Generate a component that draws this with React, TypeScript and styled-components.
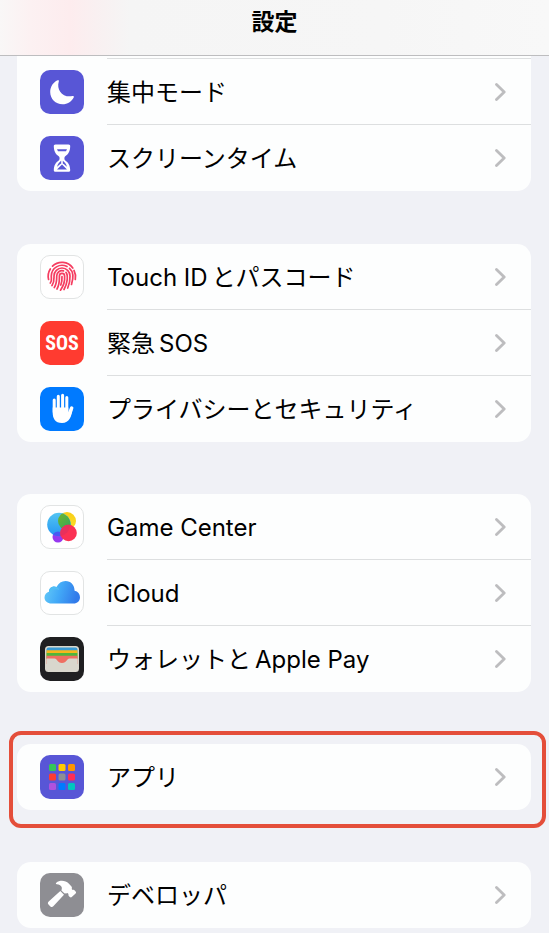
import React from "react";
import styled, { createGlobalStyle } from "styled-components";

const GlobalStyle = createGlobalStyle`
  *, *::before, *::after { box-sizing: border-box; }
  body {
    margin: 0;
    background: #f0f1f6;
    color: #000;
    font-family: Inter, "Noto Sans CJK JP", sans-serif;
  }
`;

const Page = styled.div`
  min-height: 100vh;
`;

const Header = styled.header`
  display: flex;
  justify-content: center;
  height: 56px;
  padding-top: 6px;
  border-bottom: 1px solid #bdbdbf;
  background: linear-gradient(90deg, #f9f7f7 0, #fcf1f2 30px, #fdecee 70px, #f9f0f1 96px, #f5f5f5 130px, #f6f6f6 70%, #f8f8f8 100%);
`;

const Title = styled.h1`
  margin: 0;
  font-size: 23px;
  line-height: 32px;
  font-weight: 700;
`;

const Main = styled.main`
  display: flex;
  flex-direction: column;
  gap: 52px;
  padding: 0 18px 5px 17px;
`;

const Group = styled.section<{ $continued?: boolean }>`
  position: relative;
  border-radius: ${(p) => (p.$continued ? "0 0 14px 14px" : "14px")};
  background: #fdfefe;
  padding-top: ${(p) => (p.$continued ? "3px" : "0")};
  margin-bottom: ${(p) => (p.$continued ? "1px" : "0")};
`;

const Highlight = styled.div`
  position: absolute;
  inset: -13px -15px -18px -8px;
  border: 4px solid #e44e3a;
  border-radius: 12px;
  pointer-events: none;
`;

const List = styled.ul`
  list-style: none;
  margin: 0;
  padding: 0;
`;

const Row = styled.a`
  display: flex;
  align-items: center;
  gap: 23px;
  height: 66px;
  padding-left: 23px;
  color: inherit;
  text-decoration: none;
`;

const RowBody = styled.span<{ $line: boolean }>`
  flex: 1;
  display: flex;
  align-items: center;
  justify-content: space-between;
  height: 66px;
  padding-right: 24px;
  box-shadow: ${(p) => (p.$line ? "0 -1px 0 #dddfe0" : "none")};
`;

const Label = styled.span`
  display: flex;
  gap: 4px;
  padding-top: 2px;
  font-size: 24px;
  line-height: 32px;
  white-space: nowrap;
`;

const Tile = styled.span<{ $bg: string; $outlined?: boolean }>`
  display: flex;
  align-items: center;
  justify-content: center;
  flex: none;
  width: 44px;
  height: 44px;
  border-radius: 10px;
  background: ${(p) => p.$bg};
  border: ${(p) => (p.$outlined ? "1px solid #e2e4e4" : "none")};
  color: #fff;
`;

const SosText = styled.span`
  font-family: "Liberation Sans Narrow", "Roboto Condensed", Roboto, sans-serif;
  font-size: 20px;
  line-height: 24px;
  font-weight: 700;
`;

const Art = styled.svg`
  display: block;
  flex: none;
`;

const Chevron = () => (
  <Art width="12" height="20" viewBox="0 0 12 20" fill="none" stroke="#bdbdbf" strokeWidth="2.8" strokeLinecap="round" strokeLinejoin="round" aria-hidden>
    <path d="M1.500 2.400 L9.200 10 L1.500 17.600" />
  </Art>
);

const Moon = () => (
  <Art width="44" height="44" viewBox="0 0 44 44" fill="#fff" aria-hidden>
    <path d="M17.6 10.3 C18.6 9.9 19.2 10.4 18.8 11.4 C16.2 19.5 22.5 28 32.4 26.1 C33.5 25.8 34.2 26.5 33.7 27.5 C31.6 31.7 27.4 34.3 22.6 34.3 C15.6 34.3 10.2 28.9 10.2 22 C10.2 16.6 13.2 12.3 17.6 10.3 Z" />
  </Art>
);

const Hourglass = () => (
  <Art width="44" height="44" viewBox="0 0 44 44" aria-hidden>
    <path fill="#fff" d="M15.500 8.600 H28.500 C29.700 8.600 30.300 9.300 30.200 10.400 C30 15.500 28.300 18 25 20.400 C24.200 21.200 24.200 23.400 25 24.200 C28.300 26.500 30 29 30.200 34 C30.300 35.200 29.700 35.800 28.500 35.800 H15.500 C14.300 35.800 13.700 35.200 13.800 34 C14 29 15.700 26.500 19 24.200 C19.800 23.400 19.800 21.200 19 20.400 C15.700 18 14 15.500 13.800 10.400 C13.700 9.300 14.300 8.600 15.500 8.600 Z" />
    <path fill="#5856d6" d="M17 13.300 H27 L26 15.300 H18 Z M21.200 24.800 V27.400 C19.500 28.500 18 29.500 17.200 31 C17.300 28.500 18.700 26.700 21.200 24.800 Z M22.800 24.800 V27.400 C24.500 28.500 26 29.500 26.800 31 C26.700 28.500 25.300 26.700 22.800 24.800 Z M22 28.500 L27 33.400 H17 Z" />
  </Art>
);

const Fingerprint = () => (
  <Art width="42" height="42" viewBox="1 1 42 42" fill="none" stroke="#f53d60" strokeWidth="1.7" strokeLinecap="round" aria-hidden>
    <path d="M12.500 11.200 A13.400 13.400 0 0 1 32.800 13" />
    <path d="M10.300 14 A13.400 13.400 0 0 0 8.600 24.500" />
    <path d="M34 15.500 A14 14 0 0 1 35.300 24.500" />
    <path d="M10.300 28 C12.200 25.500 11.200 23.500 11.300 21 A10.700 10.700 0 0 1 27 11.600" />
    <path d="M29.500 13.400 C33.800 17 33.200 24 31.500 29.500" />
    <path d="M12 30.500 C14.500 27 14 24 14 21 A8 8 0 0 1 30 21 C30.200 26 29.200 29.500 27.700 33" />
    <path d="M14.300 32.500 C17 28.500 16.700 25 16.700 21 A5.300 5.300 0 0 1 23.500 15.900" />
    <path d="M26 17.400 C28.500 20.500 27.200 29 24 34.500" />
    <path d="M17 34 C19.700 29.500 19.400 25 19.400 21 A2.600 2.600 0 0 1 24.600 21 C25 26 23.500 31 20.500 35.200" />
    <path d="M22 21.500 C22.200 25 21.700 27.500 20.800 30" />
  </Art>
);

const Hand = () => (
  <Art width="44" height="44" viewBox="0 0 44 44" aria-hidden>
    <g stroke="#fff" strokeWidth="3" strokeLinecap="round" fill="none">
      <path d="M14.200 13 V25 M18.300 9.300 V24 M22.600 8.300 V24 M26.800 10.600 V25" />
      <path d="M31.700 21 L28.500 29" strokeWidth="3.400" />
    </g>
    <path fill="#fff" d="M12.700 20.500 H28.300 V25.500 L32.500 23 C31.500 29 29.500 36 22 36 C15 36 12.700 31 12.700 26 Z" />
  </Art>
);

const GameCenter = () => (
  <Art width="42" height="42" viewBox="1 1 42 42" aria-hidden>
    <defs>
      <linearGradient id="gc-blue" x1="0" y1="0" x2="0" y2="1">
        <stop offset="0" stopColor="#54c5f2" />
        <stop offset="1" stopColor="#2496f4" />
      </linearGradient>
      <linearGradient id="gc-yellow" x1="0" y1="0" x2="0" y2="1">
        <stop offset="0" stopColor="#f8cd16" />
        <stop offset="1" stopColor="#fbe12b" />
      </linearGradient>
      <linearGradient id="gc-green" x1="0" y1="0" x2="1" y2="1">
        <stop offset="0" stopColor="#75b52a" />
        <stop offset="1" stopColor="#20a568" />
      </linearGradient>
      <clipPath id="gc-clip"><circle cx="19" cy="19.500" r="11.500" /></clipPath>
    </defs>
    <circle cx="18" cy="32" r="5.500" fill="#9638ef" />
    <circle cx="27" cy="16" r="9" fill="url(#gc-yellow)" />
    <circle cx="19" cy="19.500" r="11.800" fill="url(#gc-blue)" />
    <circle cx="27" cy="16" r="9" fill="url(#gc-green)" clipPath="url(#gc-clip)" />
    <circle cx="18" cy="32" r="5.500" fill="#4759f2" clipPath="url(#gc-clip)" />
    <circle cx="28.500" cy="28" r="8.300" fill="#fb3154" />
    <path d="M20.500 26 A8.300 8.300 0 0 1 30.200 19.900 A11.800 11.800 0 0 1 20.500 31 Z" fill="#e8305c" />
  </Art>
);

const Cloud = () => (
  <Art width="42" height="42" viewBox="1 1 42 42" aria-hidden>
    <defs>
      <linearGradient id="cloud-fill" x1="0" y1="0" x2="1" y2="0.200">
        <stop offset="0" stopColor="#68cdf8" />
        <stop offset="0.500" stopColor="#42a9f7" />
        <stop offset="1" stopColor="#327bea" />
      </linearGradient>
    </defs>
    <path fill="url(#cloud-fill)" d="M11.500 32.500 C7.500 32.500 4.500 30 4.500 26.500 C4.500 23.500 6.500 21.500 9 20.700 C8.700 16.800 13 14.200 16.500 16 C18.500 12 21.500 10 25.500 10 C31 10 34.500 14 34.600 19.800 C38 20.500 40 23 40 26.200 C40 30 37.300 32.500 33.500 32.500 Z" />
    <path d="M16.500 16 C18 16.500 19 17.500 19.200 19 C16.500 17.500 13 18 11 20.500 C10.500 20.400 9.500 20.500 9 20.700 C8.700 16.800 13 14.200 16.500 16 Z" fill="#51bdf4" />
  </Art>
);

const Wallet = () => (
  <Art width="44" height="44" viewBox="0 0 44 44" aria-hidden>
    <defs>
      <clipPath id="wallet-clip"><rect x="6.500" y="10.500" width="31" height="23.500" rx="2" /></clipPath>
    </defs>
    <rect x="5" y="9" width="34" height="26" rx="3.500" fill="#d9d7cd" />
    <g clipPath="url(#wallet-clip)">
      <path fill="#3b9bd4" d="M6 10 H38 V16 H6 Z" />
      <path fill="#f7b81b" d="M6 13.300 H38 V19 H6 Z" />
      <path fill="#50b63b" d="M6 16 H38 V22 H6 Z" />
      <path fill="#ef6f62" d="M6 18.800 H38 V27 H6 Z" />
      <path fill="#d9d7cd" d="M6 21.500 H14.500 C17.500 21.500 17 26 22 26 C27 26 26.500 21.500 29.500 21.500 H38 V35 H6 Z" />
    </g>
  </Art>
);

const appColors = ["#34c759", "#ffcc00", "#ff9500", "#ff3b30", "#8e8e93", "#ff2d55", "#af52de", "#007aff", "#00c7be"];

const AppGrid = () => (
  <Art width="44" height="44" viewBox="0 0 44 44" aria-hidden>
    {appColors.map((color, i) => (
      <rect key={color} x={9 + (i % 3) * 9.5} y={9 + Math.floor(i / 3) * 9.5} width="7" height="7" rx="1.500" fill={color} />
    ))}
  </Art>
);

const Hammer = () => (
  <Art width="44" height="44" viewBox="0 0 44 44" fill="#fff" aria-hidden>
    <path d="M20.300 18 L24 21.700 L13.300 33.300 C12.500 34.300 11.300 34.300 10.400 33.400 L8.500 31.500 C7.600 30.500 7.700 29.400 8.700 28.500 Z" />
    <path d="M16.300 9.800 C19.500 7 25.500 7.200 28.700 10.500 L31.500 13.500 C32.100 14.300 32 15.300 31.700 16 L32.700 17 C33.400 16.700 34.100 16.800 34.700 17.400 L35.600 18.400 C36.200 19 36.200 19.800 35.600 20.400 L31.800 24 C31.200 24.600 30.400 24.500 29.800 23.900 L28.800 22.900 C28.300 22.300 28.200 21.700 28.500 21.100 L27.400 20 C26.700 20.400 26 20.600 25.200 20.200 L24.600 20.600 L21.400 17.400 C22.700 14.500 21.500 12 16.800 11.300 C15.700 11.100 15.600 10.400 16.300 9.800 Z" />
  </Art>
);

type Item = { id: string; label: string[]; bg: string; outlined?: boolean; icon: React.ReactNode };
type Section = { id: string; continued?: boolean; highlighted?: boolean; items: Item[] };

const sections: Section[] = [
  {
    id: "attention",
    continued: true,
    items: [
      { id: "focus", label: ["集中モード"], bg: "#5856d6", icon: <Moon /> },
      { id: "screen-time", label: ["スクリーンタイム"], bg: "#5856d6", icon: <Hourglass /> },
    ],
  },
  {
    id: "security",
    items: [
      { id: "touch-id", label: ["Touch ID", "とパスコード"], bg: "#fff", outlined: true, icon: <Fingerprint /> },
      { id: "sos", label: ["緊急", "SOS"], bg: "#ff3b30", icon: <SosText aria-hidden>SOS</SosText> },
      { id: "privacy", label: ["プライバシーとセキュリティ"], bg: "#007aff", icon: <Hand /> },
    ],
  },
  {
    id: "services",
    items: [
      { id: "game-center", label: ["Game Center"], bg: "#fff", outlined: true, icon: <GameCenter /> },
      { id: "icloud", label: ["iCloud"], bg: "#fff", outlined: true, icon: <Cloud /> },
      { id: "wallet", label: ["ウォレットと", "Apple Pay"], bg: "#1f1f21", icon: <Wallet /> },
    ],
  },
  { id: "apps", highlighted: true, items: [{ id: "apps-list", label: ["アプリ"], bg: "#5856d6", icon: <AppGrid /> }] },
  { id: "developer", items: [{ id: "developer-tools", label: ["デベロッパ"], bg: "#8e8e93", icon: <Hammer /> }] },
];

export default function App() {
  return (
    <Page>
      <GlobalStyle />
      <Header>
        <Title>設定</Title>
      </Header>
      <Main>
        {sections.map((section) => (
          <Group key={section.id} $continued={section.continued}>
            <List>
              {section.items.map((item, index) => (
                <li key={item.id}>
                  <Row href={`#${item.id}`}>
                    <Tile $bg={item.bg} $outlined={item.outlined}>{item.icon}</Tile>
                    <RowBody $line={index > 0 || !!section.continued}>
                      <Label>
                        {item.label.map((part) => (
                          <span key={part}>{part}</span>
                        ))}
                      </Label>
                      <Chevron />
                    </RowBody>
                  </Row>
                </li>
              ))}
            </List>
            {section.highlighted && <Highlight />}
          </Group>
        ))}
      </Main>
    </Page>
  );
}
